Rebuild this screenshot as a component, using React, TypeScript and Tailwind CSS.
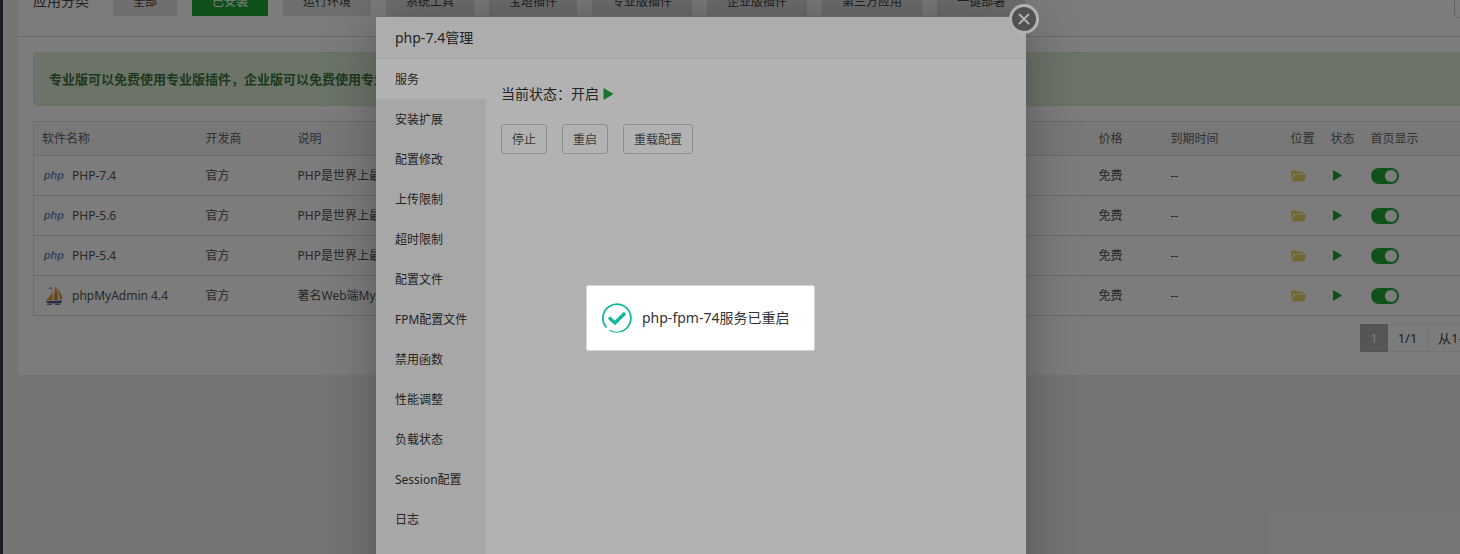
import React from "react";

type Software = {
  name: string;
  kind: "php" | "sail";
  note: string;
};

const categories = [
  "全部",
  "已安装",
  "运行环境",
  "系统工具",
  "宝塔插件",
  "专业版插件",
  "企业版插件",
  "第三方应用",
  "一键部署",
];

const software: Software[] = [
  { name: "PHP-7.4", kind: "php", note: "PHP是世界上最好的编程语言" },
  { name: "PHP-5.6", kind: "php", note: "PHP是世界上最好的编程语言" },
  { name: "PHP-5.4", kind: "php", note: "PHP是世界上最好的编程语言" },
  { name: "phpMyAdmin 4.4", kind: "sail", note: "著名Web端MySQL管理工具" },
];

const menu = [
  "服务",
  "安装扩展",
  "配置修改",
  "上传限制",
  "超时限制",
  "配置文件",
  "FPM配置文件",
  "禁用函数",
  "性能调整",
  "负载状态",
  "Session配置",
  "日志",
];

function SailIcon() {
  return (
    <svg viewBox="0 0 20 20" className="h-5 w-5" aria-hidden="true">
      <path d="M8.500 3C8.600 7 5.500 11.500 1.500 14.500L8.500 14Z" fill="#e09a34" />
      <path d="M5 1.500C7 1 8.500 2 8.300 4C7.500 3 6.500 2.500 5 2.800Z" fill="#8d8d96" />
      <path d="M11.500 0.500C10.500 5 10 10 9.500 14H14C14.200 9 13.500 4 11.500 0.500Z" fill="#dc9022" />
      <path d="M13 1.500C15.500 5 18 9 18.500 12.500L15.300 14C15.300 9 14.500 5 13 1.500Z" fill="#e09a34" />
      <path d="M1.500 15.500C7 14.500 13 15 18.500 14.500L16.500 17.500H4Z" fill="#55557f" />
      <path d="M3 18.500H8M11 18.500H16" stroke="#77779f" strokeWidth="1.200" />
    </svg>
  );
}

function FolderIcon() {
  return (
    <svg viewBox="0 0 16 12" className="h-3 w-4" aria-hidden="true" fill="#f0d264">
      <path d="M0 9.500V1.500L1 0.500H6L7 1.500H11.500L12.300 2.300V3.500H3.500L2.300 4.300Z" />
      <path d="M3.500 4.500H15.500L12.800 11.500H0.600Z" />
    </svg>
  );
}

function PlayIcon({ className }: { className: string }) {
  return (
    <svg viewBox="0 0 10 12" className={className} aria-hidden="true" fill="#20a53a">
      <path d="M0 0L10 6L0 12Z" />
    </svg>
  );
}

function SoftwareTable() {
  return (
    <table className="mt-[15px] w-full table-fixed border-collapse border border-[#ddd] text-left text-xs text-[#555]">
      <colgroup>
        <col className="w-[164px]" />
        <col className="w-[92px]" />
        <col />
        <col className="w-[72px]" />
        <col className="w-[120px]" />
        <col className="w-[40px]" />
        <col className="w-[40px]" />
        <col className="w-[80px]" />
        <col className="w-[117px]" />
      </colgroup>
      <thead>
        <tr className="h-[34px] border-b border-[#ddd] bg-[#f6f6f6] whitespace-nowrap text-[#666]">
          <th className="px-2 font-normal">软件名称</th>
          <th className="px-2 font-normal">开发商</th>
          <th className="px-2 font-normal">说明</th>
          <th className="px-2 font-normal">价格</th>
          <th className="px-2 font-normal">到期时间</th>
          <th className="px-2 font-normal">位置</th>
          <th className="px-2 font-normal">状态</th>
          <th className="px-2 font-normal">首页显示</th>
          <th className="px-2 text-right font-normal">操作</th>
        </tr>
      </thead>
      <tbody>
        {software.map((item) => (
          <tr key={item.name} className="h-10 border-b border-[#ddd] whitespace-nowrap">
            <td className="px-2">
              <span className="flex items-center gap-2">
                <span className="flex w-[22px] justify-end">
                  {item.kind === "php" ? (
                    <span className="font-['Liberation_Sans',sans-serif] text-[11px] font-bold text-[#7d95c8] italic">
                      php
                    </span>
                  ) : (
                    <SailIcon />
                  )}
                </span>
                {item.name}
              </span>
            </td>
            <td className="px-2">官方</td>
            <td className="overflow-hidden px-2">{item.note}</td>
            <td className="px-2">免费</td>
            <td className="px-2">--</td>
            <td className="px-2">
              <a href="#folder" aria-label="打开目录" className="block">
                <FolderIcon />
              </a>
            </td>
            <td className="px-2.5">
              <a href="#status" aria-label="运行中" className="block">
                <PlayIcon className="h-[11px] w-[9px]" />
              </a>
            </td>
            <td className="px-2">
              <input
                type="checkbox"
                defaultChecked
                aria-label="首页显示"
                className="block h-4 w-7 appearance-none rounded-full bg-[#20a53a] p-0.5 before:ml-3 before:block before:size-3 before:rounded-full before:bg-white before:content-['']"
              />
            </td>
            <td className="px-2 text-right text-[#20a53a]">设置 | 卸载</td>
          </tr>
        ))}
      </tbody>
    </table>
  );
}

function Page() {
  return (
    <div className="flex h-full overflow-hidden bg-[#f0f0f0]">
      <aside className="w-[3px] shrink-0 bg-[#353d48]" />
      <main className="min-w-0 flex-1 pl-[15px]">
        <section className="-mt-[14px] -mr-[115px] bg-white pb-[23px]">
          <header className="flex items-start border-b border-[#ddd] pb-5 pl-[15px]">
            <span className="mr-6 text-sm leading-[30px] text-[#444]">应用分类</span>
            <nav className="flex gap-[15px]">
              {categories.map((label, index) => (
                <button
                  key={label}
                  type="button"
                  className={
                    index === 1
                      ? "h-[30px] bg-[#20a53a] px-5 pt-0.5 text-xs whitespace-nowrap text-white"
                      : "h-[30px] bg-[#e5e5e5] px-5 pt-0.5 text-xs whitespace-nowrap text-[#444]"
                  }
                >
                  {label}
                </button>
              ))}
            </nav>
            <input
              type="search"
              aria-label="搜索应用"
              className="mr-[15px] -mb-0.5 ml-auto h-8 w-[106px] rounded-sm border border-[#ccc]"
            />
          </header>
          <div className="px-[15px] pt-[15px]">
            <p className="rounded border border-[#d6e9c6] bg-[#dff0d8] px-[15px] py-4 text-[13px] leading-5 font-bold text-[#3c763d]">
              专业版可以免费使用专业版插件，企业版可以免费使用专业版及企业版插件
            </p>
            <SoftwareTable />
            <div className="mt-2 flex justify-end text-[13px] leading-[26px] whitespace-nowrap text-[#444]">
              <span className="w-7 border border-[#aaa] bg-[#b0b0b0] text-center text-white">1</span>
              <span className="w-10 border border-l-0 border-[#ececec] text-center">1/1</span>
              <span className="w-[66px] border border-l-0 border-[#ececec] pl-2.5">从1-4条</span>
              <span className="w-[66px] border border-l-0 border-[#ececec] pl-2.5">共4条</span>
            </div>
          </div>
        </section>
      </main>
    </div>
  );
}

function ManageDialog() {
  return (
    <div className="absolute inset-0 flex justify-center bg-black/30 pt-[17px] pr-[58px]">
      <div
        role="dialog"
        aria-label="php-7.4管理"
        className="relative flex h-[600px] w-[650px] flex-col bg-white shadow-[1px_1px_50px_rgba(0,0,0,0.3)]"
      >
        <h2 className="h-[42px] border-b border-[#eee] bg-[#f8f8f8] px-[19px] text-sm leading-[42px] text-[#333]">
          php-7.4管理
        </h2>
        <button
          type="button"
          aria-label="关闭"
          className="absolute -top-[13px] -right-[13px] flex size-[30px] items-center justify-center rounded-full border-[3px] border-white bg-[#757575]"
        >
          <svg viewBox="0 0 12 12" className="size-3" fill="none" stroke="#fff" strokeWidth="2" strokeLinecap="round">
            <path d="M1.500 1.500L10.500 10.500M10.500 1.500L1.500 10.500" />
          </svg>
        </button>
        <div className="flex flex-1">
          <nav className="flex w-[110px] flex-col bg-[#f0f0f0] text-xs text-[#333]">
            {menu.map((label, index) => (
              <button
                key={label}
                type="button"
                className={
                  index === 0
                    ? "h-10 bg-white pt-0.5 pl-[19px] text-left whitespace-nowrap"
                    : "h-10 pt-0.5 pl-[19px] text-left whitespace-nowrap"
                }
              >
                {label}
              </button>
            ))}
          </nav>
          <div className="flex flex-1 flex-col gap-5 px-[15px] pt-[25px]">
            <p className="flex items-center text-sm text-[#333]">
              <span>当前状态：开启</span>
              <PlayIcon className="ml-1 h-3 w-[11px]" />
            </p>
            <div className="flex gap-[15px] text-xs text-[#555]">
              {["停止", "重启", "重载配置"].map((label) => (
                <button
                  key={label}
                  type="button"
                  className="h-[30px] rounded-[3px] border border-[#ccc] px-2.5 pt-0.5"
                >
                  {label}
                </button>
              ))}
            </div>
          </div>
        </div>
      </div>
    </div>
  );
}

function Toast() {
  return (
    <div className="absolute inset-0 flex items-start justify-center bg-black/30 pt-[285px] pr-[59px]">
      <div
        role="status"
        className="flex h-[66px] w-[229px] items-center gap-2.5 rounded-[2px] border border-[#d3d4d3] bg-white px-[15px] text-sm whitespace-nowrap text-[#333]"
      >
        <svg viewBox="0 0 30 30" className="size-[30px] shrink-0" fill="none" stroke="#10b99a" aria-hidden="true">
          <path d="M4.500 24.500A14 14 0 1 1 19 28.500" strokeWidth="1.800" />
          <path d="M19 28.500A14 14 0 0 1 7.500 27.200" strokeWidth="1.200" />
          <path d="M7 14.500L13 20L23 10" strokeWidth="3.300" />
        </svg>
        php-fpm-74服务已重启
      </div>
    </div>
  );
}

export default function App() {
  return (
    <div className="relative h-screen overflow-hidden font-['Noto_Sans','Noto_Sans_CJK_SC',sans-serif]">
      <Page />
      <ManageDialog />
      <Toast />
    </div>
  );
}
